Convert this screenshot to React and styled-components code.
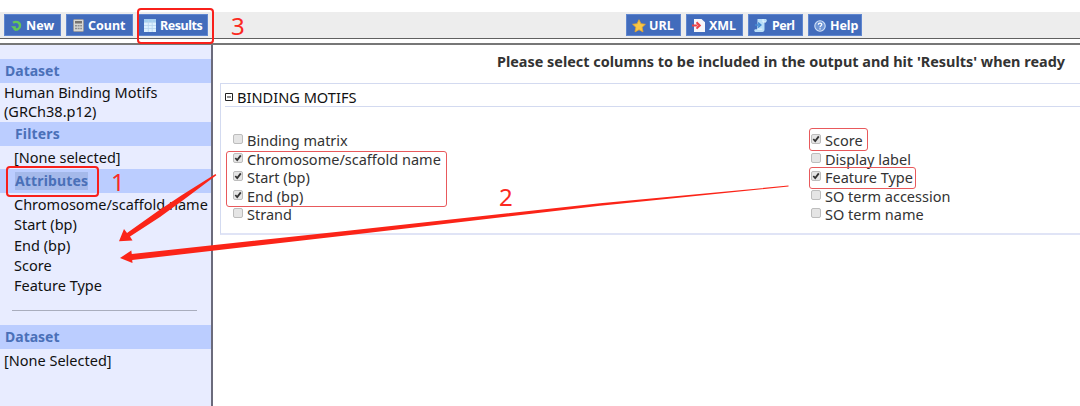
import React from 'react';
import styled, { createGlobalStyle } from 'styled-components';

const Global = createGlobalStyle`
  * { box-sizing: border-box; }
  body { margin: 0; background: #fff; overflow: hidden; }
`;

const Page = styled.div`
  position: relative;
  width: 1080px;
  height: 406px;
  display: flex;
  flex-direction: column;
  overflow: hidden;
  background: #fff;
  color: #111;
  font-family: "Noto Sans", "Open Sans", sans-serif;
  font-size: 14.5px;
  white-space: nowrap;
`;

const Toolbar = styled.header`
  display: flex;
  justify-content: space-between;
  align-items: flex-start;
  height: 27px;
  margin-top: 12px;
  padding: 2px 218px 0 4px;
  background: #ededed;
  border-bottom: 1px solid #606060;
`;

const Group = styled.div`
  display: flex;
  gap: 5px;
`;

const Button = styled.button`
  display: flex;
  align-items: center;
  gap: ${(p) => p.$gap || 4}px;
  width: ${(p) => p.$w}px;
  height: 22px;
  padding: 1px 0 0 ${(p) => p.$pad || 6}px;
  border: 1px solid #5f86cf;
  background: #426cbc;
  color: #fff;
  font: bold 12.5px/20px "Noto Sans", "Open Sans", sans-serif;
  letter-spacing: ${(p) => p.$ls || 0}px;
  svg { flex: none; }
`;

const Body = styled.div`
  display: flex;
  flex: 1;
  margin-top: 4px;
  border-top: 2px solid #777;
`;

const Sidebar = styled.aside`
  width: 213px;
  padding-top: 14px;
  background: #e8ecff;
  border-right: 2px solid #6b6b7c;
`;

const Band = styled.h2`
  margin: 0;
  height: 24px;
  padding-left: ${(p) => (p.$nested ? 15 : 5)}px;
  background: #bbcdff;
  color: #4a70b8;
  font-size: 14px;
  font-weight: 700;
  line-height: 24px;
  letter-spacing: ${(p) => (p.$nested ? 0.15 : 0)}px;
`;

const Selected = styled.span`
  display: inline-block;
  height: 18px;
  line-height: 18px;
  background: #a5b9ea;
`;

const DatasetName = styled.div`
  height: 39px;
  padding: 0 0 0 4px;
  line-height: 18.5px;
`;

const Note = styled.div`
  height: 23px;
  padding-left: ${(p) => (p.$nested ? 14 : 4)}px;
  line-height: 22px;
`;

const AttributeList = styled.ul`
  margin: 0;
  padding: 1px 0 0 14px;
  list-style: none;
  line-height: 20.3px;
`;

const Divider = styled.hr`
  width: 185px;
  height: 1px;
  margin: 15px 0 14px 12px;
  border: 0;
  background: #a9adbd;
`;

const Main = styled.main`
  flex: 1;
  min-width: 0;
  padding-left: 7px;
`;

const Hint = styled.p`
  margin: 0;
  height: 38px;
  padding-right: 15px;
  color: #333;
  font-size: 14.43px;
  font-weight: 700;
  line-height: 34px;
  text-align: right;
`;

const Panel = styled.section`
  height: 152px;
  border: 1px solid #d3daf0;
  border-width: 1px 0 2px 1px;
  border-bottom-color: #e0e4f6;
`;

const PanelTitle = styled.h3`
  display: flex;
  align-items: center;
  gap: 4px;
  height: 23px;
  margin: 0 0 0 4px;
  padding-top: 4px;
  border-bottom: 1px solid #d3daf0;
  font-size: 14.6px;
  font-weight: 400;
`;

const Columns = styled.div`
  display: grid;
  grid-template-columns: 578px 1fr;
  padding: 24px 0 0 12px;
`;

const Option = styled.label`
  display: flex;
  align-items: center;
  gap: 4px;
  height: 18.5px;
  color: #333;
`;

const Box = styled.svg`
  flex: none;
  margin-bottom: 2px;
`;

const Overlay = styled.svg`
  position: absolute;
  inset: 0;
  pointer-events: none;
`;

const Mark = styled.div`
  position: absolute;
  left: ${(p) => p.$x}px;
  top: ${(p) => p.$y}px;
  width: ${(p) => p.$w}px;
  height: ${(p) => p.$h}px;
  border: ${(p) => (p.$bold ? '2.5px solid #f8201b' : '1px solid #e8595c')};
  border-radius: ${(p) => (p.$bold ? 4 : 3)}px;
`;

const Step = styled.span`
  position: absolute;
  left: ${(p) => p.$x}px;
  top: ${(p) => p.$y}px;
  color: #fb2a22;
  font: 24px/24px "Noto Sans", sans-serif;
`;

const NewIcon = () => (
  <svg width="11" height="12" viewBox="0 0 11 12" fill="none">
    <path d="M2 2.8C5 .8 9 2.3 9 5.7C9 9 5.5 10.5 3 8.7" stroke="#62c756" strokeWidth="2.4" />
    <path d="M0 6.3h4.8v5z" fill="#62c756" />
  </svg>
);
const CountIcon = () => (
  <svg width="11" height="13" viewBox="0 0 11 13">
    <rect x=".5" y=".5" width="10" height="12" rx="1" fill="#d8d8d4" stroke="#9a9aa0" />
    <path d="M2 2h7v2.5H2z" fill="#77736f" />
    <path d="M2 6h2v1.5H2zm2.6 0h2v1.5h-2zM7.2 6H9v1.5H7.2zM2 8.7h2v1.5H2zm2.6 0h2v1.5h-2zM7.2 8.7H9v1.5H7.2z" fill="#8e8e8e" />
  </svg>
);
const TableIcon = () => (
  <svg width="12" height="13" viewBox="0 0 12 13">
    <path d="M0 0h12v13H0z" fill="#dcefff" />
    <path d="M0 0h12v3H0z" fill="#a4ceef" />
    <path d="M0 3.5h12M0 6.5h12M0 9.5h12M4.3 1v12M8.2 1v12" stroke="#b5d3ef" strokeWidth=".8" />
  </svg>
);
const StarIcon = () => (
  <svg width="14" height="14" viewBox="0 0 14 14">
    <path d="M7 .7l1.9 4 4.5.6-3.3 3 .9 4.6L7 10.7l-4 2.2.9-4.6-3.3-3 4.5-.6z" fill="#f9c846" stroke="#e9a62c" strokeWidth=".8" strokeLinejoin="round" />
  </svg>
);
const XmlIcon = () => (
  <svg width="13" height="13" viewBox="0 0 13 13">
    <path d="M2 0h7.5L13 3.2V13H2z" fill="#f6f7fb" />
    <path d="M0 6.4h5.5M4.5 3.3l3.3 3.1-3.3 3.2" fill="none" stroke="#ed4148" strokeWidth="2" />
  </svg>
);
const PerlIcon = () => (
  <svg width="13" height="13" viewBox="0 0 13 13">
    <path d="M3.5 0H12c1.3.8 1 2.8 0 3h-1.5v7.5c0 1.4-.8 2.5-2 2.5H1.2c-1.3-.4-1.3-2.4 0-2.8h2z" fill="#b9def8" />
    <path d="M9 0v3h3M3.3 10.2h5" fill="none" stroke="#e9f7ff" />
    <path d="M1 6h4.5M4 3.7L6.8 6 4 8.5" fill="none" stroke="#438bd3" strokeWidth="1.5" />
  </svg>
);
const HelpIcon = () => (
  <svg width="12" height="12" viewBox="0 0 12 12" fill="none">
    <circle cx="6" cy="6" r="5.2" fill="#6f96d6" stroke="#d2e1f6" strokeWidth="1.1" />
    <path d="M4.3 4.8C4.3 2.6 7.8 2.7 7.8 4.6C7.8 5.8 6 5.8 6 7.3M6 8.3v1.2" stroke="#fff" strokeWidth="1.2" />
  </svg>
);

const Checkbox = ({ checked }) => (
  <Box width="10" height="10" viewBox="0 0 10 10">
    <rect x=".5" y=".5" width="9" height="9" rx="1.5" fill="#e5e5e5" stroke="#bdbdbd" />
    {checked && <path d="M2.3 5l1.9 2L7.8 2.4" fill="none" stroke="#333" strokeWidth="1.8" />}
  </Box>
);

const left = [['Binding matrix', false], ['Chromosome/scaffold name', true], ['Start (bp)', true], ['End (bp)', true], ['Strand', false]];
const right = [['Score', true], ['Display label', false], ['Feature Type', true], ['SO term accession', false], ['SO term name', false]];
const attributes = ['Chromosome/scaffold name', 'Start (bp)', 'End (bp)', 'Score', 'Feature Type'];

const OptionColumn = ({ items }) => (
  <div>
    {items.map(([label, checked]) => (
      <Option key={label}><Checkbox checked={checked} />{label}</Option>
    ))}
  </div>
);

export default function App() {
  return (
    <Page>
      <Global />
      <Toolbar>
        <Group>
          <Button $w={57}><NewIcon />New</Button>
          <Button $w={67}><CountIcon />Count</Button>
          <Button $w={70} $pad={5} $ls={-0.45}><TableIcon />Results</Button>
        </Group>
        <Group>
          <Button $w={55} $gap={3} $pad={5}><StarIcon />URL</Button>
          <Button $w={57} $pad={5} $ls={-0.1}><XmlIcon />XML</Button>
          <Button $w={55} $pad={5} $gap={5} $ls={-0.5}><PerlIcon />Perl</Button>
          <Button $w={54} $pad={5} $ls={-0.1}><HelpIcon />Help</Button>
        </Group>
      </Toolbar>
      <Body>
        <Sidebar>
          <Band>Dataset</Band>
          <DatasetName>Human Binding Motifs<br />(GRCh38.p12)</DatasetName>
          <Band $nested>Filters</Band>
          <Note $nested>[None selected]</Note>
          <Band $nested><Selected>Attributes</Selected></Band>
          <AttributeList>
            {attributes.map((a) => <li key={a}>{a}</li>)}
          </AttributeList>
          <Divider />
          <Band>Dataset</Band>
          <Note>[None Selected]</Note>
        </Sidebar>
        <Main>
          <Hint>Please select columns to be included in the output and hit 'Results' when ready</Hint>
          <Panel>
            <PanelTitle>
              <svg width="8" height="8" viewBox="0 0 8 8" fill="none" stroke="#222">
                <path d="M.5.5h7v7h-7zM2 4h4" />
              </svg>
              BINDING MOTIFS
            </PanelTitle>
            <Columns>
              <OptionColumn items={left} />
              <OptionColumn items={right} />
            </Columns>
          </Panel>
        </Main>
      </Body>
      <Mark $bold $x={137} $y={8} $w={77} $h={36} />
      <Mark $bold $x={6} $y={166} $w={93} $h={31} />
      <Mark $x={226} $y={151} $w={221} $h={56} />
      <Mark $x={809} $y={128} $w={59} $h={23} />
      <Mark $x={809} $y={167} $w={107} $h={22} />
      <Overlay width="1080" height="406" viewBox="0 0 1080 406" fill="#fb2418">
        <path d="M215.5 174L182 195L158 211L127 233L124 229L119 241.3L132.5 240.5L130 236.5L160 217L184 199.5L216.3 175.3Z" />
        <path d="M788.5 185.6L600 203.2L350 230.5L131.8 254L131.3 250.5L120 258L132.5 263L132.2 260L350 235L600 205.8L788.5 186.6Z" />
      </Overlay>
      <Step $x={231} $y={14}>3</Step>
      <Step $x={111} $y={170}>1</Step>
      <Step $x={499} $y={185}>2</Step>
    </Page>
  );
}
